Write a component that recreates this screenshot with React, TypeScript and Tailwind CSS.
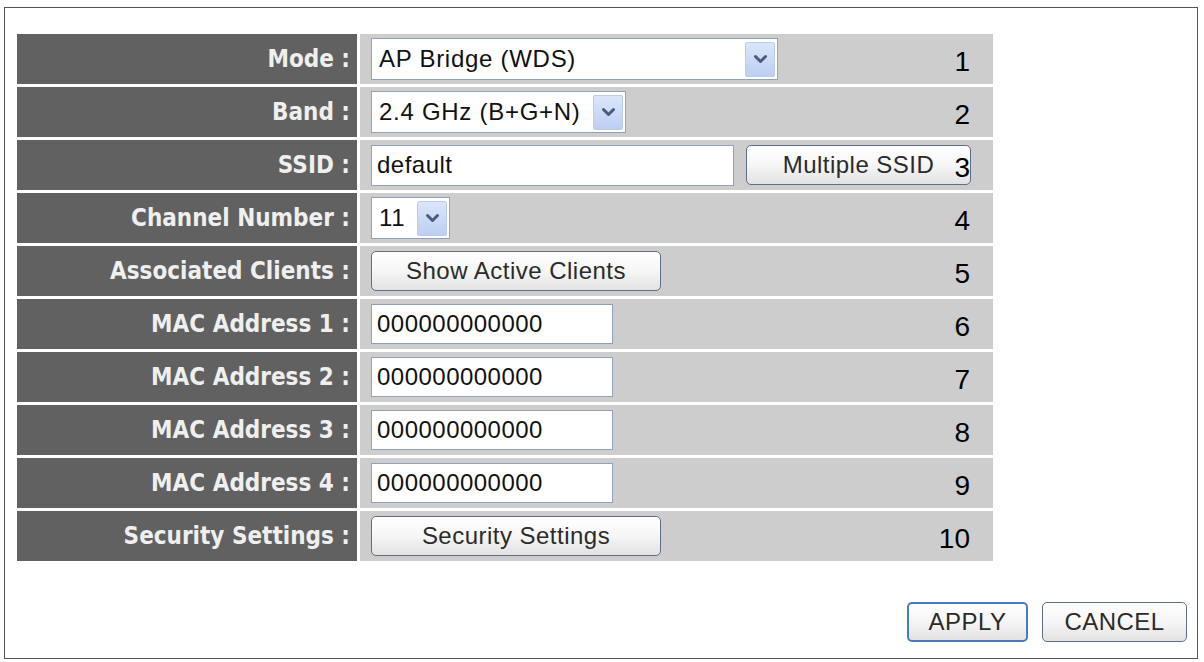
import React from "react";

type Row = {
  label: string;
  num: string;
  control: React.ReactNode;
};

const ui = "font-['Liberation_Sans',Arial,sans-serif]";

function Arrow() {
  return (
    <span className="ml-auto mr-[2px] flex h-[35px] w-[30px] items-center justify-center rounded-[2px] border border-[#b9cbea] bg-gradient-to-b from-[#dbe6fb] to-[#bccff2]">
      <svg width="15" height="10" viewBox="0 0 15 10">
        <path d="M2.5 2.5 L7.5 7.5 L12.5 2.5" fill="none" stroke="#4b5b7d" strokeWidth="3" strokeLinecap="round" strokeLinejoin="round" />
      </svg>
    </span>
  );
}

function Select({ value, width }: { value: string; width: string }) {
  return (
    <div className={`flex h-[42px] ${width} items-center border border-[#8ea3bd] bg-white pl-[7px] ${ui} text-[24px] tracking-[0.03em] text-[#111]`}>
      <span>{value}</span>
      <Arrow />
    </div>
  );
}

function TextBox({ value, width, h = "h-[40px]" }: { value: string; width: string; h?: string }) {
  return (
    <div className={`flex ${h} ${width} items-center border border-[#8ea3bd] bg-white pl-[5px] ${ui} text-[24px] tracking-[0.02em] text-[#111]`}>
      {value}
    </div>
  );
}

function Btn({ label, width, focused = false }: { label: string; width: string; focused?: boolean }) {
  return (
    <button
      className={`flex h-[40px] ${width} items-center justify-center rounded-[5px] bg-gradient-to-b from-white via-[#f6f6f6] to-[#e2e2e2] ${ui} text-[24px] tracking-[0.02em] text-[#2b2b2b] ${
        focused ? "border-2 border-[#4a7bbf]" : "border-[1.5px] border-[#5d6f88]"
      }`}
    >
      {label}
    </button>
  );
}

const rows: Row[] = [
  { label: "Mode :", num: "1", control: <Select value="AP Bridge (WDS)" width="w-[407px]" /> },
  { label: "Band :", num: "2", control: <Select value="2.4 GHz (B+G+N)" width="w-[255px]" /> },
  {
    label: "SSID :",
    num: "3",
    control: (
      <div className="flex items-center gap-[12px]">
        <TextBox value="default" width="w-[363px]" h="h-[41px]" />
        <Btn label="Multiple SSID" width="w-[225px]" />
      </div>
    ),
  },
  { label: "Channel Number :", num: "4", control: <Select value="11" width="w-[79px]" /> },
  { label: "Associated Clients :", num: "5", control: <Btn label="Show Active Clients" width="w-[290px]" /> },
  { label: "MAC Address 1 :", num: "6", control: <TextBox value="000000000000" width="w-[242px]" /> },
  { label: "MAC Address 2 :", num: "7", control: <TextBox value="000000000000" width="w-[242px]" /> },
  { label: "MAC Address 3 :", num: "8", control: <TextBox value="000000000000" width="w-[242px]" /> },
  { label: "MAC Address 4 :", num: "9", control: <TextBox value="000000000000" width="w-[242px]" /> },
  { label: "Security Settings :", num: "10", control: <Btn label="Security Settings" width="w-[290px]" /> },
];

export default function App() {
  return (
    <div className="h-[662px] w-[1204px] overflow-hidden bg-white pl-[4px] pt-[7px]">
      <div className="flex h-[652px] w-[1194px] flex-col border-[1.5px] border-[#555] pl-[12px] pt-[26px]">
        <div className="grid w-[976px] grid-cols-[340px_633px] gap-[3px]">
          {rows.map((row) => (
            <React.Fragment key={row.label}>
              <div className="flex h-[50px] items-center justify-end bg-[#616161] pr-[7px] font-['DejaVu_Sans_Condensed',sans-serif] text-[24px] font-bold text-[#efefef]">
                {row.label}
              </div>
              <div className="relative flex h-[50px] items-center bg-[#cdcdcd] pl-[11px]">
                {row.control}
                <span className={`absolute right-[23px] top-1/2 mt-[3px] -translate-y-1/2 ${ui} text-[28px] leading-none text-black`}>
                  {row.num}
                </span>
              </div>
            </React.Fragment>
          ))}
        </div>
        <div className="mt-[41px] flex justify-end gap-[14px] pr-[10px]">
          <Btn label="APPLY" width="w-[121px]" focused />
          <Btn label="CANCEL" width="w-[145px]" />
        </div>
      </div>
    </div>
  );
}
